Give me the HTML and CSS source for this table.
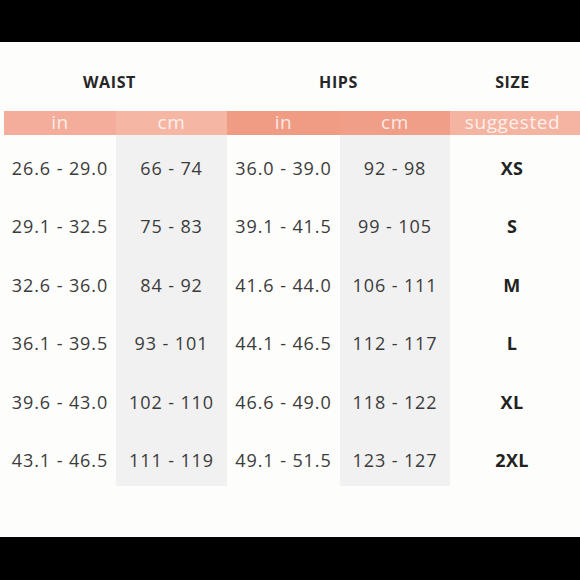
FILE: index.html
```html
<!DOCTYPE html>
<html>
<head>
<meta charset="utf-8">
<link rel="stylesheet" href="styles.css">
</head>
<body>
<div class="bar-top"></div>
<main class="chart">
  <div class="heads">
    <div class="head head-waist">WAIST</div>
    <div class="head head-hips">HIPS</div>
    <div class="head head-size">SIZE</div>
  </div>
  <div class="units">
    <div class="unit u1">in</div>
    <div class="unit u2">cm</div>
    <div class="unit u3">in</div>
    <div class="unit u4">cm</div>
    <div class="unit u5">suggested</div>
  </div>
  <div class="body">
    <div class="col c1">
      <div class="cell">26.6 - 29.0</div>
      <div class="cell">29.1 - 32.5</div>
      <div class="cell">32.6 - 36.0</div>
      <div class="cell">36.1 - 39.5</div>
      <div class="cell">39.6 - 43.0</div>
      <div class="cell">43.1 - 46.5</div>
    </div>
    <div class="col c2 grey">
      <div class="cell">66 - 74</div>
      <div class="cell">75 - 83</div>
      <div class="cell">84 - 92</div>
      <div class="cell">93 - 101</div>
      <div class="cell">102 - 110</div>
      <div class="cell">111 - 119</div>
    </div>
    <div class="col c3">
      <div class="cell">36.0 - 39.0</div>
      <div class="cell">39.1 - 41.5</div>
      <div class="cell">41.6 - 44.0</div>
      <div class="cell">44.1 - 46.5</div>
      <div class="cell">46.6 - 49.0</div>
      <div class="cell">49.1 - 51.5</div>
    </div>
    <div class="col c4 grey">
      <div class="cell">92 - 98</div>
      <div class="cell">99 - 105</div>
      <div class="cell">106 - 111</div>
      <div class="cell">112 - 117</div>
      <div class="cell">118 - 122</div>
      <div class="cell">123 - 127</div>
    </div>
    <div class="col c5">
      <div class="cell size">XS</div>
      <div class="cell size">S</div>
      <div class="cell size">M</div>
      <div class="cell size">L</div>
      <div class="cell size">XL</div>
      <div class="cell size">2XL</div>
    </div>
  </div>
</main>
<div class="bar-bottom"></div>
</body>
</html>
```
FILE: styles.css
```css
html, body {
  margin: 0;
  padding: 0;
}
body {
  width: 580px;
  height: 580px;
  overflow: hidden;
  background: #fdfdfb;
  font-family: "Open Sans", "Liberation Sans", sans-serif;
  display: flex;
  flex-direction: column;
}
.bar-top {
  height: 42px;
  background: #000;
  flex: none;
}
.bar-bottom {
  height: 43px;
  background: #000;
  flex: none;
  margin-top: auto;
}
.chart {
  padding-left: 4px;
  display: flex;
  flex-direction: column;
}
.heads {
  height: 69px;
  display: grid;
  grid-template-columns: 223px 223px 130px;
  align-items: center;
}
.head {
  text-align: center;
  font-weight: 700;
  font-size: 16px;
  letter-spacing: 0.6px;
  color: #262626;
  padding-top: 11px;
}
.head-waist { padding-right: 12px; }
.head-size { padding-right: 5px; }
.units {
  height: 24px;
  display: grid;
  grid-template-columns: 112px 111px 113px 110px 130px;
}
.unit {
  text-align: center;
  font-size: 19px;
  line-height: 22px;
  font-weight: 400;
  letter-spacing: 0.6px;
  color: rgba(255, 255, 255, 0.8);
}
.u1 { background: #f3ad9a; }
.u2 { background: #f5b6a4; }
.u3 { background: #f09c85; }
.u4 { background: #f19e88; }
.u5 { background: #f5b4a2; padding-right: 5px; }
.body {
  display: grid;
  grid-template-columns: 112px 111px 113px 110px 130px;
}
.col {
  display: flex;
  flex-direction: column;
}
.grey { background: #f1f1f1; }
.cell {
  height: 58.5px;
  box-sizing: border-box;
  padding-top: 7px;
  display: flex;
  align-items: center;
  justify-content: center;
  font-size: 18px;
  letter-spacing: 0.9px;
  color: #3b3b3b;
  white-space: nowrap;
}
.size {
  font-weight: 700;
  color: #222;
  font-size: 18px;
  letter-spacing: 0.3px;
  padding-right: 6px;
}
```
